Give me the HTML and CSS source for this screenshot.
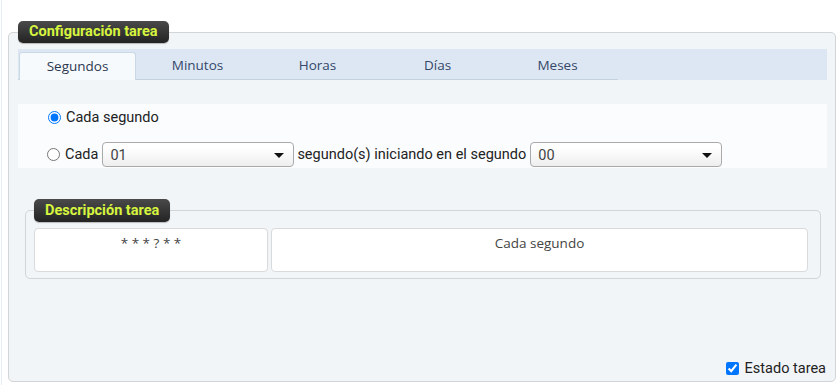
FILE: index.html
```html
<!DOCTYPE html>
<html lang="es">
<head>
  <meta charset="UTF-8">
  <title>Configuración tarea</title>
  <link rel="stylesheet" href="styles.css">
</head>
<body>
  <div class="page">
    <fieldset class="box main-box">
      <legend class="pill">Configuración tarea</legend>

      <!-- pestañas -->
      <div class="tabbar">
        <ul class="tabs">
          <li class="tab active">Segundos</li>
          <li class="tab">Minutos</li>
          <li class="tab">Horas</li>
          <li class="tab">Días</li>
          <li class="tab">Meses</li>
        </ul>
      </div>

      <div class="panel">
        <label class="row first">
          <input type="radio" name="modo" checked>
          <span>Cada segundo</span>
        </label>
        <div class="row second">
          <input type="radio" name="modo">
          <span>Cada</span>
          <span class="select-wrap">
            <select class="sel">
              <option>01</option>
            </select>
          </span>
          <span>segundo(s) iniciando en el segundo</span>
          <span class="select-wrap">
            <select class="sel">
              <option>00</option>
            </select>
          </span>
        </div>
      </div>

      <fieldset class="box desc-box">
        <legend class="pill">Descripción tarea</legend>
        <div class="desc">
          <div class="cell cron">* * * ? * *</div>
          <div class="cell text">Cada segundo</div>
        </div>
      </fieldset>

      <label class="estado">
        <input type="checkbox" checked>
        <span>Estado tarea</span>
      </label>
    </fieldset>
  </div>
</body>
</html>
```

FILE: styles.css
```css
body {
  margin: 0;
  font-family: Roboto, "Liberation Sans", Arial, sans-serif;
  font-size: 14.5px;
  color: #222;
  background: #fff;
}
.page {
  margin-left: 1px;
  border-left: 1px solid #e4edf8;
  padding: 21px 2px 0 6px;
  height: 364px;
}
.box {
  margin: 0;
  border: 1px solid #d2d4d6;
  border-radius: 5px;
  background: #f2f5f7;
  min-width: 0;
}
.main-box {
  padding: 6px 8px 4px 9px;
}
.pill {
  background: linear-gradient(#4a4a4a, #232323);
  color: #d6f53e;
  font-weight: bold;
  font-size: 14.5px;
  line-height: 22px;
  height: 22px;
  padding: 0 11px;
  border-radius: 5px;
  box-shadow: 0 1px 1px rgba(0, 0, 0, 0.25);
}

/* pestañas */
.tabbar {
  background: #dde7f3;
  height: 31px;
}
.tabs {
  list-style: none;
  margin: 0;
  padding: 3px 0 0 1px;
  display: flex;
  gap: 3px;
  width: 600px;
  height: 31px;
  box-sizing: border-box;
  border-bottom: 1px solid #c4d1df;
}
.tab {
  width: 117px;
  height: 27px;
  line-height: 27px;
  text-align: center;
  font-family: "Open Sans", "Noto Sans", sans-serif;
  font-size: 13.5px;
  color: #34476a;
  box-sizing: border-box;
}
.tab.active {
  height: 28px;
  margin-bottom: -1px;
  background: #f7fafd;
  border: 1px solid #cbd8e6;
  border-bottom: none;
  border-radius: 3px 3px 0 0;
  color: #2c3850;
}

.panel {
  margin-top: 24px;
  background: #fafcfe;
  padding: 4px 0 1px 30px;
}
.row {
  display: flex;
  align-items: center;
}
.row.first {
  height: 18px;
}
.row.second {
  margin-top: 16px;
  height: 25px;
}
.row input[type="radio"] {
  margin: 0 5px 0 0;
  width: 13px;
  height: 13px;
}
.row.second input[type="radio"] {
  margin-left: -1px;
}
.row.second .select-wrap {
  margin: 0 3px 0 4px;
}
.select-wrap {
  position: relative;
  display: inline-block;
}
.select-wrap::after {
  content: "";
  position: absolute;
  right: 10px;
  top: 11px;
  border-left: 5px solid transparent;
  border-right: 5px solid transparent;
  border-top: 5px solid #111;
  pointer-events: none;
}
.sel {
  appearance: none;
  -webkit-appearance: none;
  width: 192px;
  height: 25px;
  border: 1px solid #aaa;
  border-radius: 4px;
  background: linear-gradient(#ffffff 20%, #eeeeee);
  padding: 2px 0 0 7px;
  font-family: Roboto, "Liberation Sans", sans-serif;
  font-size: 14.5px;
  color: #444;
}

/* descripción */
.desc-box {
  margin: 31px 6px 0 7px;
  padding: 6px 12px 6px 8px;
}
.desc-box .pill {
  height: 23px;
  line-height: 23px;
}
.desc {
  display: flex;
  gap: 3px;
}
.cell {
  height: 44px;
  box-sizing: border-box;
  background: #fff;
  border: 1px solid #d8dadc;
  border-radius: 4px;
  text-align: center;
  padding-top: 5px;
  font-family: "Open Sans", "Noto Sans", sans-serif;
  font-size: 13.5px;
  color: #444;
}
.cron {
  width: 234px;
}
.text {
  flex: 1;
}

.estado {
  margin-top: 80px;
  display: flex;
  justify-content: flex-end;
  align-items: center;
  height: 18px;
  padding-right: 1px;
}
.estado input {
  margin: 0 6px 0 0;
  width: 13px;
  height: 13px;
}
```
